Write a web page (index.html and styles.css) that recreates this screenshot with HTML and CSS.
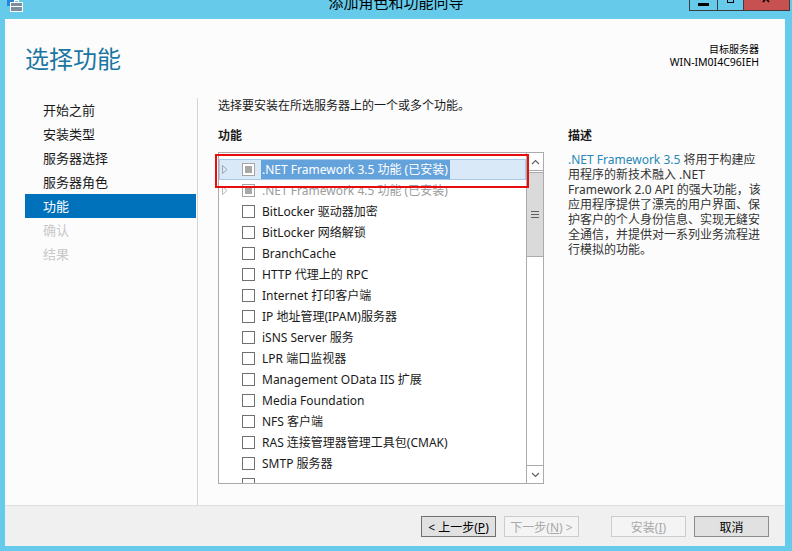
FILE: index.html
```html
<!DOCTYPE html>
<html lang="zh-CN">
<head>
  <meta charset="UTF-8">
  <title>添加角色和功能向导</title>
  <link rel="stylesheet" href="styles.css">
</head>
<body>
  <div class="window">
    <div class="titlebar">
      <svg class="app-icon" width="17" height="12" viewBox="0 0 17 12">
        <rect x="0" y="0" width="8" height="6" fill="#2a86d8"/>
        <rect x="3.5" y="2.5" width="12" height="9" fill="#7a8ea0" stroke="#fff"/>
        <rect x="7.5" y="0.5" width="4" height="2" fill="none" stroke="#fff"/>
        <line x1="4" y1="6.5" x2="15" y2="6.5" stroke="#fff"/>
      </svg>
      <div class="title">添加角色和功能向导</div>
      <div class="controls">
        <div class="ctl min"><span></span></div>
        <div class="ctl max"><span></span></div>
        <div class="ctl close">
          <svg width="10" height="6" viewBox="0 0 10 6">
            <path d="M1 -4 L7 3 M7 -4 L1 3" stroke="#000" stroke-width="1.6" fill="none"/>
          </svg>
        </div>
      </div>
    </div>

    <div class="content">
      <div class="header">
        <h1>选择功能</h1>
        <div class="target">
          <div class="target-label">目标服务器</div>
          <div class="target-name">WIN-IM0I4C96IEH</div>
        </div>
      </div>

      <div class="body">
        <ul class="nav">
          <li>开始之前</li>
          <li>安装类型</li>
          <li>服务器选择</li>
          <li>服务器角色</li>
          <li class="active">功能</li>
          <li class="disabled">确认</li>
          <li class="disabled">结果</li>
        </ul>

        <div class="main">
          <p class="intro">选择要安装在所选服务器上的一个或多个功能。</p>
          <div class="columns">
            <div class="features">
              <div class="col-title">功能</div>
              <div class="list">
                <div class="rows">
                  <div class="row selected">
                    <span class="expander"><svg width="6" height="9" viewBox="0 0 6 9"><path d="M0.5 0.5 L5 4.5 L0.5 8.5 Z" fill="none" stroke="#a6a6a6"/></svg></span>
                    <span class="check partial"></span>
                    <span class="label"><span class="hl">.NET Framework 3.5 功能 (已安装)</span></span>
                  </div>
                  <div class="row grayed">
                    <span class="expander"><svg width="6" height="9" viewBox="0 0 6 9"><path d="M0.5 0.5 L5 4.5 L0.5 8.5 Z" fill="none" stroke="#b8b8b8"/></svg></span>
                    <span class="check partial"></span>
                    <span class="label">.NET Framework 4.5 功能 (已安装)</span>
                  </div>
                  <div class="row"><span class="expander"></span><span class="check"></span><span class="label">BitLocker 驱动器加密</span></div>
                  <div class="row"><span class="expander"></span><span class="check"></span><span class="label">BitLocker 网络解锁</span></div>
                  <div class="row"><span class="expander"></span><span class="check"></span><span class="label">BranchCache</span></div>
                  <div class="row"><span class="expander"></span><span class="check"></span><span class="label">HTTP 代理上的 RPC</span></div>
                  <div class="row"><span class="expander"></span><span class="check"></span><span class="label">Internet 打印客户端</span></div>
                  <div class="row"><span class="expander"></span><span class="check"></span><span class="label">IP 地址管理(IPAM)服务器</span></div>
                  <div class="row"><span class="expander"></span><span class="check"></span><span class="label">iSNS Server 服务</span></div>
                  <div class="row"><span class="expander"></span><span class="check"></span><span class="label">LPR 端口监视器</span></div>
                  <div class="row"><span class="expander"></span><span class="check"></span><span class="label">Management OData IIS 扩展</span></div>
                  <div class="row"><span class="expander"></span><span class="check"></span><span class="label">Media Foundation</span></div>
                  <div class="row"><span class="expander"></span><span class="check"></span><span class="label">NFS 客户端</span></div>
                  <div class="row"><span class="expander"></span><span class="check"></span><span class="label">RAS 连接管理器管理工具包(CMAK)</span></div>
                  <div class="row"><span class="expander"></span><span class="check"></span><span class="label">SMTP 服务器</span></div>
                  <div class="row"><span class="expander"></span><span class="check"></span><span class="label"></span></div>
                </div>
                <div class="scrollbar">
                  <div class="sb-btn up">
                    <svg width="9" height="6" viewBox="0 0 9 6"><path d="M1 5 L4.5 1.5 L8 5" fill="none" stroke="#606060" stroke-width="1.2"/></svg>
                  </div>
                  <div class="sb-thumb"><span></span><span></span><span></span></div>
                  <div class="sb-track"></div>
                  <div class="sb-btn down">
                    <svg width="9" height="6" viewBox="0 0 9 6"><path d="M1 1 L4.5 4.5 L8 1" fill="none" stroke="#606060" stroke-width="1.2"/></svg>
                  </div>
                </div>
                <div class="annotation"></div>
              </div>
            </div>

            <div class="desc">
              <div class="col-title">描述</div>
              <p class="desc-text">
                <span class="link">.NET Framework 3.5</span> 将用于构建应<br>
                用程序的新技术融入 .NET<br>
                Framework 2.0 API 的强大功能，该<br>
                应用程序提供了漂亮的用户界面、保<br>
                护客户的个人身份信息、实现无缝安<br>
                全通信，并提供对一系列业务流程进<br>
                行模拟的功能。
              </p>
            </div>
          </div>
        </div>
      </div>

      <div class="footer">
        <button class="btn default">&lt; 上一步(<u>P</u>)</button>
        <button class="btn" disabled>下一步(<u>N</u>) &gt;</button>
        <button class="btn install" disabled>安装(<u>I</u>)</button>
        <button class="btn">取消</button>
      </div>
    </div>
  </div>
</body>
</html>
```

FILE: styles.css
```css
body {
  margin: 0;
  font-family: "Noto Sans", "Noto Sans CJK SC", sans-serif;
  color: #1a1a1a;
}
.window {
  width: 792px;
  height: 551px;
  background-color: #66cbea;
  overflow: hidden;
}
.titlebar {
  position: relative;
  height: 19px;
  overflow: hidden;
}
.app-icon {
  position: absolute;
  left: 7px;
  top: 0;
}
.title {
  text-align: center;
  font-size: 15px;
  line-height: 15px;
  margin-top: -5px;
  color: #000;
}
.controls {
  position: absolute;
  top: -1px;
  right: 2px;
  display: flex;
  border: 1px solid #3c3c3c;
  border-top: none;
}
.ctl {
  position: relative;
  height: 11px;
  overflow: hidden;
}
.ctl + .ctl {
  border-left: 1px solid #3c3c3c;
}
.min {
  width: 27px;
}
.min span {
  position: absolute;
  left: 8px;
  top: 4px;
  width: 11px;
  height: 3px;
  background-color: #000;
}
.max {
  width: 25px;
}
.max span {
  position: absolute;
  left: 9px;
  top: -4px;
  width: 5px;
  height: 5px;
  border: 1px solid #000;
  border-top-width: 2px;
}
.close {
  width: 45px;
  background-color: #c75050;
  text-align: center;
}
.close svg {
  display: block;
  margin: 0 auto;
}

.content {
  height: 527px;
  margin: 0 7px 0 5px;
  background-color: #fcfcfc;
  display: flex;
  flex-direction: column;
}
.header {
  height: 79px;
  display: flex;
  justify-content: space-between;
  padding: 0 26px 0 20px;
  box-sizing: border-box;
}
h1 {
  margin: 25px 0 0;
  font-size: 24px;
  line-height: 30px;
  font-weight: normal;
  color: #1a76a2;
}
.target {
  margin-top: 24px;
  text-align: right;
  font-size: 10.5px;
  line-height: 13px;
  color: #000;
}
.target-label {
  font-size: 10px;
}

.body {
  flex: 1;
  display: flex;
}
.nav {
  list-style: none;
  margin: 0 0 0 20px;
  padding: 0;
  width: 172px;
  border-right: 1px solid #d6d6d6;
}
.nav li {
  height: 24px;
  line-height: 24px;
  padding-left: 18px;
  font-size: 13px;
}
.nav li.active {
  background-color: #0072bb;
  color: #fff;
  margin-right: 1px;
}
.nav li.disabled {
  color: #c8c8c8;
}

.main {
  flex: 1;
  padding-left: 20px;
  font-size: 12px;
}
.intro {
  margin: 0;
  line-height: 16px;
}
.columns {
  display: flex;
  gap: 24px;
  margin-top: 14px;
}
.col-title {
  font-weight: bold;
  line-height: 16px;
  margin-bottom: 8px;
}
.features {
  width: 326px;
}
.list {
  position: relative;
  height: 332px;
  border: 1px solid #ababab;
  box-sizing: border-box;
  display: flex;
  background-color: #fff;
}
.rows {
  flex: 1;
  padding-top: 6px;
  overflow: hidden;
}
.row {
  height: 21px;
  display: flex;
  align-items: center;
  padding-left: 3px;
  box-sizing: border-box;
  white-space: nowrap;
}
.row.selected {
  background-color: #dae9f8;
  border: 1px solid #a9c9ea;
  padding-left: 2px;
}
.row.grayed {
  color: #9c9c9c;
}
.expander {
  width: 20px;
  display: flex;
  align-items: center;
}
.expander svg {
  display: block;
}
.check {
  position: relative;
  width: 13px;
  height: 13px;
  border: 1px solid #707070;
  box-sizing: border-box;
  background-color: #fff;
  margin-right: 7px;
  flex-shrink: 0;
}
.check.partial {
  border-color: #a6a6a6;
}
.check.partial::after {
  content: "";
  position: absolute;
  left: 2px;
  top: 2px;
  width: 7px;
  height: 7px;
  background-color: #a8a8a8;
}
.label {
  line-height: 20px;
}
.hl {
  display: inline-block;
  background-color: #64a2dc;
  color: #fff;
  line-height: 19px;
  padding: 0 2px 0 1px;
  margin-left: -1px;
}

.scrollbar {
  width: 17px;
  border-left: 1px solid #ababab;
  display: flex;
  flex-direction: column;
  box-sizing: border-box;
}
.sb-btn {
  height: 17px;
  display: flex;
  align-items: center;
  justify-content: center;
}
.sb-btn.up {
  border-bottom: 1px solid #ababab;
}
.sb-btn.down {
  border-top: 1px solid #ababab;
}
.sb-thumb {
  height: 83px;
  margin-top: 1px;
  background-color: #dadada;
  border-top: 1px solid #ababab;
  border-bottom: 1px solid #ababab;
  display: flex;
  flex-direction: column;
  align-items: center;
  justify-content: center;
  gap: 2px;
}
.sb-thumb span {
  width: 8px;
  height: 1px;
  background-color: #606060;
}
.sb-track {
  flex: 1;
}
.annotation {
  position: absolute;
  left: -4px;
  top: 1px;
  width: 314px;
  height: 34px;
  border: 2px solid #e80d0d;
  box-sizing: border-box;
}

.desc {
  width: 200px;
}
.desc-text {
  margin: 3px 0 0;
  line-height: 15px;
  white-space: nowrap;
  color: #333;
}
.link {
  color: #2787b6;
}

.footer {
  height: 41px;
  border-top: 1px solid #dfdfdf;
  background-color: #f0f0f0;
  box-sizing: border-box;
  display: flex;
  justify-content: flex-end;
  padding: 10px 16px 0 0;
}
.btn {
  width: 75px;
  height: 21px;
  margin-left: 8px;
  padding: 0;
  font-family: inherit;
  font-size: 12px;
  color: #000;
  background-color: #e1e1e1;
  border: 1px solid #8c8c8c;
}
.btn.default {
  border-color: #707070;
}
.btn:disabled {
  color: #a8a8a8;
  background-color: #f4f4f4;
  border-color: #cccccc;
}
.btn.install {
  margin-left: 32px;
}
```
